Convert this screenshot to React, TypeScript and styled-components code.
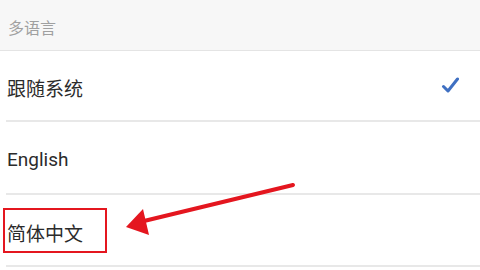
import React from "react";
import styled, { createGlobalStyle } from "styled-components";

const Global = createGlobalStyle`
  html, body { margin: 0; padding: 0; background: #fff; }
  body { width: 480px; height: 270px; overflow: hidden; }
  * { box-sizing: border-box; }
`;

const Page = styled.div`
  position: relative;
  width: 480px;
  height: 270px;
  overflow: hidden;
  background: #fff;
  font-family: Roboto, "Noto Sans CJK SC", sans-serif;
  display: flex;
  flex-direction: column;
`;

const SectionHeader = styled.div`
  height: 51px;
  background: #f7f7f7;
  border-bottom: 1px solid #e4e4e4;
  display: flex;
  align-items: center;
  padding: 4px 0 0 8px;
  font-size: 16px;
  color: #a0a0a0;
`;

const List = styled.div`
  display: flex;
  flex-direction: column;
  padding-left: 6px;
`;

const Row = styled.div<{ $h: number }>`
  height: ${(p) => p.$h}px;
  border-bottom: 2px solid #e8e8e8;
  display: flex;
  align-items: center;
  justify-content: space-between;
  padding: 4px 20px 0 1px;
`;

const Label = styled.span`
  font-size: 19px;
  color: #2b2b2b;
`;

const Check = styled.svg`
  width: 18px;
  height: 16px;
  margin-top: -6px;
  margin-right: 1px;
`;

const Annotation = styled.svg`
  position: absolute;
  left: 0;
  top: 0;
  width: 480px;
  height: 270px;
  pointer-events: none;
`;

export default function App() {
  return (
    <>
      <Global />
      <Page>
        <SectionHeader>多语言</SectionHeader>
        <List>
          <Row $h={71}>
            <Label>跟随系统</Label>
            <Check viewBox="0 0 18 16">
              <path d="M2.5 9.5 L7 14 L16.5 2" fill="none" stroke="#3f70c2" strokeWidth="3" strokeLinecap="round" strokeLinejoin="round" />
            </Check>
          </Row>
          <Row $h={73}>
            <Label>English</Label>
          </Row>
          <Row $h={72}>
            <Label>简体中文</Label>
          </Row>
        </List>
        <Annotation viewBox="0 0 480 270">
          <rect x="4" y="209" width="102" height="43" fill="none" stroke="#e4161f" strokeWidth="2" />
          <line x1="293" y1="185" x2="144" y2="221" stroke="#e4161f" strokeWidth="4" strokeLinecap="round" />
          <polygon points="126,227 143,209 149,235" fill="#e4161f" />
        </Annotation>
      </Page>
    </>
  );
}
